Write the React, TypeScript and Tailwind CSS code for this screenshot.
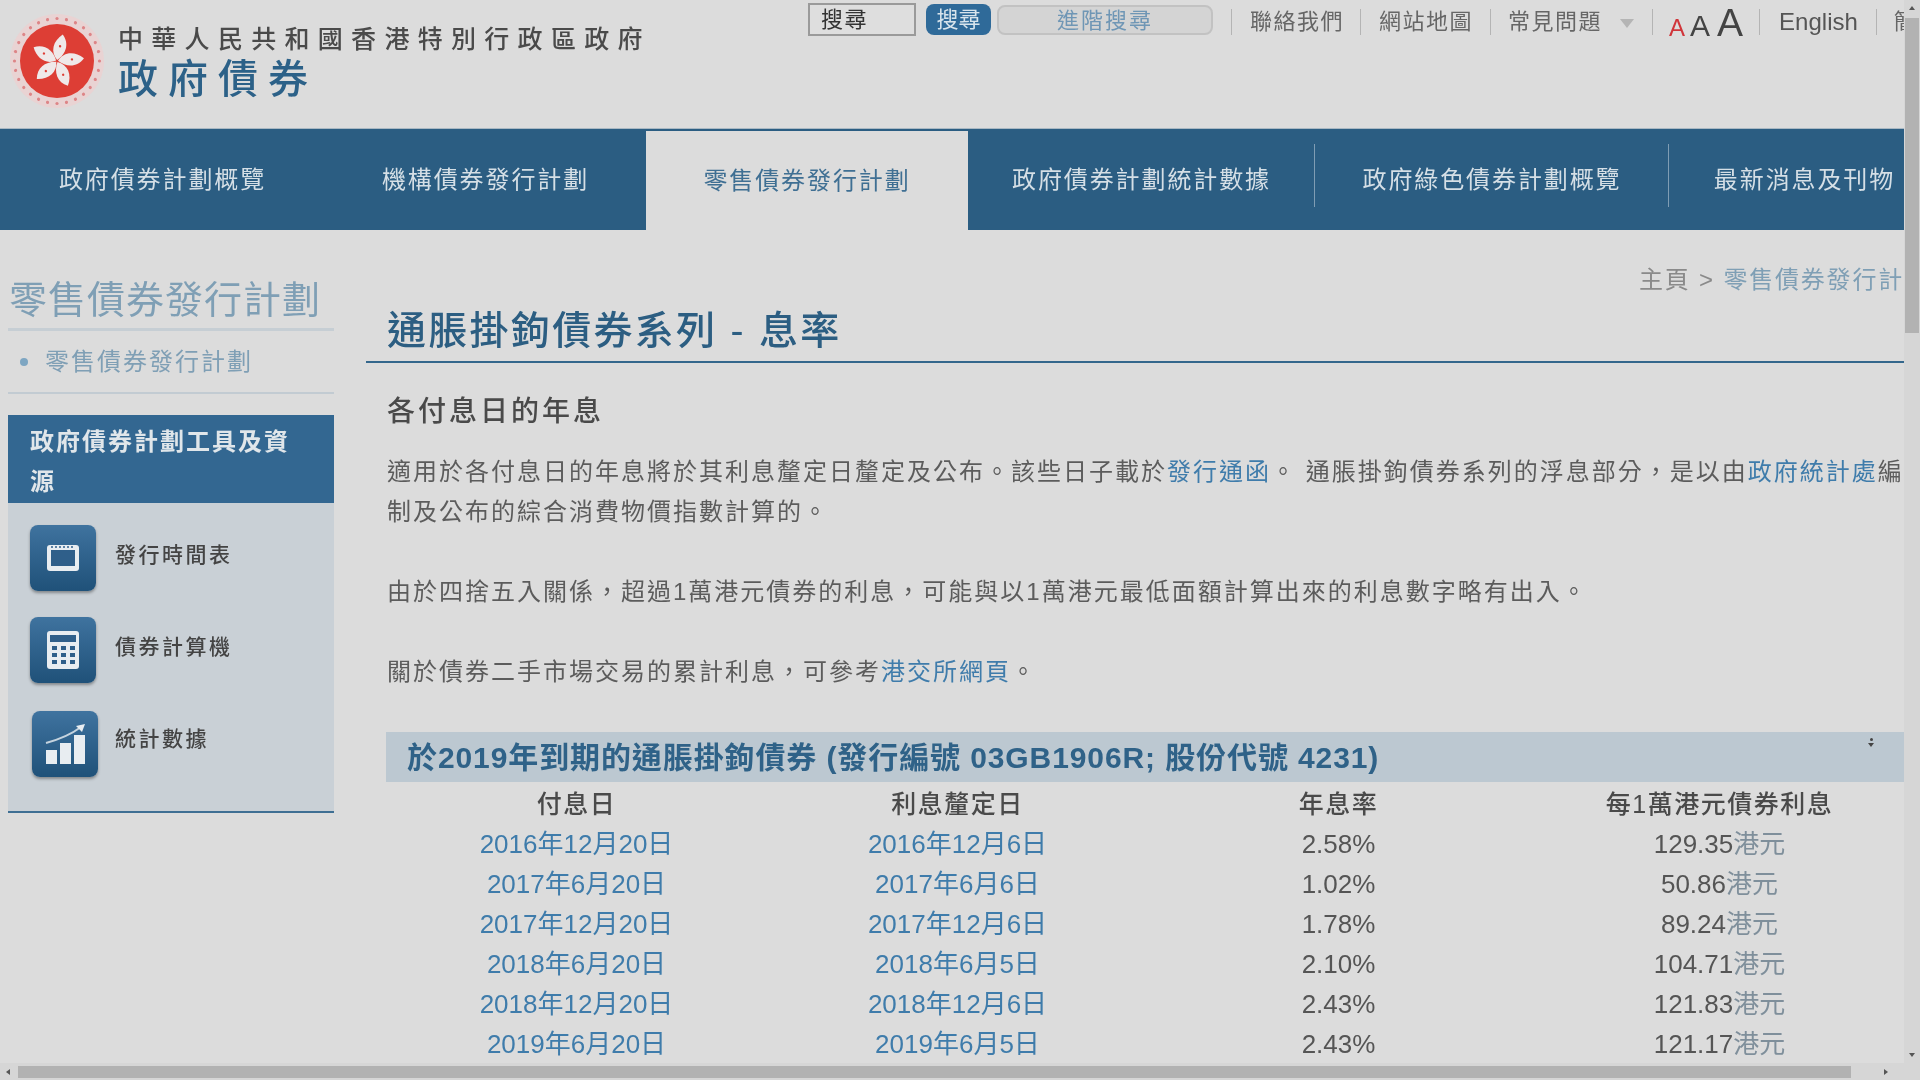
import { Fragment } from "react";

const font = "font-['Liberation_Sans','Noto_Sans_CJK_TC',sans-serif]";

const navItems = [
  { label: "政府債券計劃概覽", width: "w-[325px]" },
  { label: "機構債券發行計劃", width: "w-[321px]" },
  { label: "零售債券發行計劃", width: "w-[322px]", active: true },
  { label: "政府債券計劃統計數據", width: "w-[347px]", sep: true },
  { label: "政府綠色債券計劃概覽", width: "w-[354px]", sep: true },
  { label: "最新消息及刊物", width: "w-[271px]" },
];

const rows = [
  ["2016年12月20日", "2016年12月6日", "2.58%", "129.35"],
  ["2017年6月20日", "2017年6月6日", "1.02%", "50.86"],
  ["2017年12月20日", "2017年12月6日", "1.78%", "89.24"],
  ["2018年6月20日", "2018年6月5日", "2.10%", "104.71"],
  ["2018年12月20日", "2018年12月6日", "2.43%", "121.83"],
  ["2019年6月20日", "2019年6月5日", "2.43%", "121.17"],
];

function Emblem() {
  const petals = [0, 72, 144, 216, 288];
  const dots = Array.from({ length: 28 }, (_, i) => (i * 360) / 28);
  return (
    <svg width="96" height="96" viewBox="0 0 96 96" className="shrink-0">
      <circle cx="48" cy="48" r="47" fill="#e9d3d3" />
      {dots.map((a) => (
        <circle key={a} cx="48" cy="5.5" r="1.6" fill="#dd8587" transform={`rotate(${a} 48 48)`} />
      ))}
      <circle cx="48" cy="48" r="37" fill="#dd3e35" />
      {petals.map((a) => (
        <g key={a} transform={`rotate(${a + 8} 48 48)`}>
          <path d="M48 47 C40 40 41 29 50 21 C58 29 56 40 48 47 Z" fill="#efe9e9" />
          <circle cx="49" cy="33" r="1.2" fill="#dd3e35" />
        </g>
      ))}
    </svg>
  );
}

function ToolIcon({ kind, className }: { kind: "calendar" | "calc" | "chart"; className?: string }) {
  return (
    <div
      className={`flex h-[66px] w-[66px] shrink-0 items-center justify-center rounded-lg bg-gradient-to-b from-[#3f739f] to-[#1f5179] shadow-[0_2px_3px_rgba(0,0,0,0.35)] ${className ?? ""}`}
    >
      {kind === "calendar" && (
        <svg width="36" height="32" viewBox="0 0 36 32">
          <rect x="2" y="3" width="32" height="26" rx="3" fill="#e8edf1" />
          <rect x="6" y="8" width="24" height="16" fill="#2f5f8a" />
          <path d="M6 5h24" stroke="#2f5f8a" strokeWidth="1.5" strokeDasharray="2 2" />
        </svg>
      )}
      {kind === "calc" && (
        <svg width="34" height="40" viewBox="0 0 34 40">
          <rect x="1" y="1" width="32" height="38" rx="3" fill="#e8edf1" />
          <rect x="4" y="5" width="26" height="7" fill="#2f5f8a" />
          {[16, 23, 30].map((y) =>
            [6, 15, 24].map((x) => <rect key={`${x}-${y}`} x={x} y={y} width="5" height="4" fill="#2f5f8a" />),
          )}
        </svg>
      )}
      {kind === "chart" && (
        <svg width="44" height="44" viewBox="0 0 44 44">
          <rect x="3" y="28" width="11" height="14" fill="#e8edf1" />
          <rect x="17" y="21" width="11" height="21" fill="#e8edf1" />
          <rect x="31" y="13" width="11" height="29" fill="#e8edf1" />
          <path d="M3 21 C14 18 26 14 38 5" fill="none" stroke="#c5d3de" strokeWidth="2" />
          <path d="M33 4 L42 2 L39 10 Z" fill="#e8edf1" />
        </svg>
      )}
    </div>
  );
}

function TopSep({ className }: { className: string }) {
  return <span className={`h-[26px] w-px shrink-0 bg-[#b4b4b4] ${className}`} />;
}

export default function App() {
  return (
    <div className={`flex h-[1080px] w-[1920px] flex-col overflow-hidden bg-[#dcdcdc] blur-[0.7px] ${font}`}>
      <div className="flex min-h-0 flex-1">
        <div className="w-[1904px] shrink-0 overflow-hidden">
          {/* header */}
          <div className="flex h-[129px] items-start border-b border-[#a9b8c3]">
            <div className="ml-[9px] mt-[13px]">
              <Emblem />
            </div>
            <div className="ml-[13px] mt-[24px] w-[642px] shrink-0">
              <div className="text-[25px] font-medium leading-[30px] tracking-[8.3px] whitespace-nowrap text-[#4a4a4a]">
                中華人民共和國香港特別行政區政府
              </div>
              <div className="mt-[2px] text-[40px] font-medium leading-[46px] tracking-[10px] text-[#2c6188]">政府債券</div>
            </div>
            <div className="ml-[48px] mt-[3px] flex items-start whitespace-nowrap">
              <div className="flex h-[33px] w-[108px] items-center border-2 border-[#9a9a9a] bg-[#dedede] pl-[11px] text-[22px] tracking-[1.5px] text-[#333]">
                搜尋
              </div>
              <div className="ml-[10px] mt-[1px] flex h-[31px] w-[65px] items-center justify-center rounded-lg bg-[#2f6a99] text-[22px] text-[#d8e4ec]">
                搜尋
              </div>
              <div className="ml-[6px] mt-[2px] flex h-[30px] w-[216px] items-center justify-center rounded-lg border-2 border-[#c2c2c2] bg-[#d4d4d4] text-[22px] tracking-[2px] text-[#6f96b5]">
                進階搜尋
              </div>
              <div className="mt-[-2px] flex items-center text-[22px] leading-[30px] tracking-[1.5px] text-[#666]">
                <TopSep className="ml-[18px]" />
                <span className="ml-[18px]">聯絡我們</span>
                <TopSep className="ml-[16px]" />
                <span className="ml-[18px]">網站地圖</span>
                <TopSep className="ml-[17px]" />
                <span className="ml-[17px]">常見問題</span>
                <span className="ml-[18px] mt-[2px] h-0 w-0 border-x-[7px] border-t-[9px] border-x-transparent border-t-[#b5b5b5]" />
                <TopSep className="ml-[18px]" />
                <span className="ml-[16px] mt-[7px] flex items-baseline tracking-normal text-[#444]">
                  <span className="text-[24px] text-[#d0353a]">A</span>
                  <span className="ml-[5px] text-[30px]">A</span>
                  <span className="ml-[7px] text-[39px]">A</span>
                </span>
                <TopSep className="ml-[16px]" />
                <span className="ml-[19px] text-[24px] tracking-normal text-[#555]">English</span>
                <TopSep className="ml-[18px]" />
                <span className="ml-[17px]">簡</span>
              </div>
            </div>
          </div>

          {/* main nav */}
          <div className="flex h-[101px] bg-[#2b5d82] text-[24px] tracking-[1.9px] whitespace-nowrap">
            {navItems.map((item) => (
              <div
                key={item.label}
                className={`flex shrink-0 items-center justify-center ${item.width} ${
                  item.active ? "mt-[2px] bg-[#dcdcdc] text-[#3f6f93]" : "text-[#d5dfe6]"
                } ${item.sep ? "relative" : ""}`}
              >
                {item.label}
                {item.sep && <span className="absolute right-0 top-[15px] h-[63px] w-px bg-[#7f9db4]" />}
              </div>
            ))}
          </div>

          <div className="flex">
            {/* sidebar */}
            <div className="ml-[8px] w-[326px] shrink-0">
              <div className="mt-[49px] whitespace-nowrap pb-[7px] pl-[1px] text-[38px] leading-[42px] tracking-[1px] text-[#7f9fb5]">
                零售債券發行計劃
              </div>
              <div className="h-[3px] bg-[#c6ced4]" />
              <div className="flex h-[63px] items-center border-b-2 border-[#c2cbd2]">
                <span className="ml-[12px] h-[8px] w-[8px] rounded-full bg-[#7ea6c2]" />
                <span className="ml-[17px] text-[24px] tracking-[2px] text-[#7f9fb5]">零售債券發行計劃</span>
              </div>
              <div className="mt-[21px] bg-[#336791] px-[22px] pb-[1px] pt-[7px] text-[24px] font-bold leading-[40px] tracking-[2px] text-[#e0e6ea]">
                政府債券計劃工具及資源
              </div>
              <div className="h-[310px] border-b-2 border-[#3f6f93] bg-[#c9d0d6] pl-[22px] pt-[22px]">
                <div className="flex items-center">
                  <ToolIcon kind="calendar" />
                  <span className="ml-[19px] mb-[6px] text-[21px] font-medium tracking-[2.5px] text-[#444]">發行時間表</span>
                </div>
                <div className="mt-[26px] flex items-center">
                  <ToolIcon kind="calc" />
                  <span className="ml-[19px] mb-[6px] text-[21px] font-medium tracking-[2.5px] text-[#444]">債券計算機</span>
                </div>
                <div className="mt-[28px] flex items-center">
                  <ToolIcon kind="chart" className="ml-[2px]" />
                  <span className="ml-[17px] mb-[10px] text-[21px] font-medium tracking-[2.5px] text-[#444]">統計數據</span>
                </div>
              </div>
            </div>

            {/* content */}
            <div className="ml-[32px] w-[1538px] shrink-0">
              <div className="mt-[34px] text-right text-[24px] leading-[32px] tracking-[1.8px] whitespace-nowrap text-[#8a8a8a]">
                主頁 &gt; <span className="text-[#7f9fb5]">零售債券發行計</span>
              </div>
              <div className="mt-[10px] border-b-2 border-[#34678c] pb-[5px] pl-[21px] text-[39px] font-medium leading-[50px] tracking-[2.3px] text-[#2c5e82]">
                通脹掛鉤債券系列 - 息率
              </div>
              <div className="ml-[21px]">
                <div className="mt-[29px] text-[28px] font-medium leading-[40px] tracking-[3px] text-[#4a4a4a]">各付息日的年息</div>
                <p className="mt-[20px] w-[1520px] text-[24px] leading-[40px] tracking-[2px] text-[#5c5c5c]">
                  適用於各付息日的年息將於其利息釐定日釐定及公布。該些日子載於<span className="text-[#3f7cab]">發行通函</span>。
                  通脹掛鉤債券系列的浮息部分，是以由<span className="text-[#3f7cab]">政府統計處</span>編制及公布的綜合消費物價指數計算的。
                </p>
                <p className="mt-[40px] text-[24px] leading-[40px] tracking-[2px] text-[#5c5c5c]">
                  由於四捨五入關係，超過1萬港元債券的利息，可能與以1萬港元最低面額計算出來的利息數字略有出入。
                </p>
                <p className="mt-[40px] text-[24px] leading-[40px] tracking-[2px] text-[#5c5c5c]">
                  關於債券二手市場交易的累計利息，可參考<span className="text-[#3f7cab]">港交所網頁</span>。
                </p>
              </div>
              <div className="relative ml-[20px] mt-[40px] flex h-[50px] w-[1518px] items-center bg-[#bcc8d1] pl-[21px] text-[30px] font-bold tracking-[0.9px] whitespace-nowrap text-[#2f6288]">
                於2019年到期的通脹掛鉤債券 (發行編號 03GB1906R; 股份代號 4231)
                <span className="absolute left-[1482px] top-[6px] flex flex-col items-center gap-[2px]">
                  <span className="h-[3px] w-[3px] rounded-full bg-[#444]" />
                  <span className="h-0 w-0 border-x-[3px] border-t-[4px] border-x-transparent border-t-[#444]" />
                </span>
              </div>
              <div className="ml-[20px] mt-[2px] grid w-[1524px] grid-cols-4 text-center text-[26px] leading-[40px] text-[#555]">
                <div className="text-[25px] font-medium tracking-[1.5px] text-[#4a4a4a]">付息日</div>
                <div className="text-[25px] font-medium tracking-[1.5px] text-[#4a4a4a]">利息釐定日</div>
                <div className="text-[25px] font-medium tracking-[1.5px] text-[#4a4a4a]">年息率</div>
                <div className="text-[25px] font-medium tracking-[1.5px] text-[#4a4a4a]">每1萬港元債券利息</div>
                {rows.map((r) => (
                  <Fragment key={r[0]}>
                    <div className="text-[#3f7cab]">{r[0]}</div>
                    <div className="text-[#3f7cab]">{r[1]}</div>
                    <div>{r[2]}</div>
                    <div>
                      {r[3]}
                      <span className="text-[#7f8f9b]">港元</span>
                    </div>
                  </Fragment>
                ))}
              </div>
            </div>
          </div>
        </div>

        {/* vertical scrollbar */}
        <div className="flex w-[16px] shrink-0 flex-col items-center bg-[#d6d6d6]">
          <span className="mt-[6px] h-0 w-0 border-x-[3px] border-b-[4px] border-x-transparent border-b-[#555]" />
          <div className="mt-[8px] h-[315px] w-[14px] bg-[#b2b2b2]" />
          <span className="mb-[6px] mt-auto h-0 w-0 border-x-[3px] border-t-[4px] border-x-transparent border-t-[#555]" />
        </div>
      </div>

      {/* horizontal scrollbar */}
      <div className="flex h-[17px] shrink-0 items-center bg-[#d6d6d6]">
        <span className="ml-[6px] h-0 w-0 border-y-[3px] border-r-[4px] border-y-transparent border-r-[#555]" />
        <div className="ml-[8px] h-[12px] w-[1833px] bg-[#b2b2b2]" />
        <span className="ml-[33px] h-0 w-0 border-y-[3px] border-l-[4px] border-y-transparent border-l-[#555]" />
      </div>
    </div>
  );
}
